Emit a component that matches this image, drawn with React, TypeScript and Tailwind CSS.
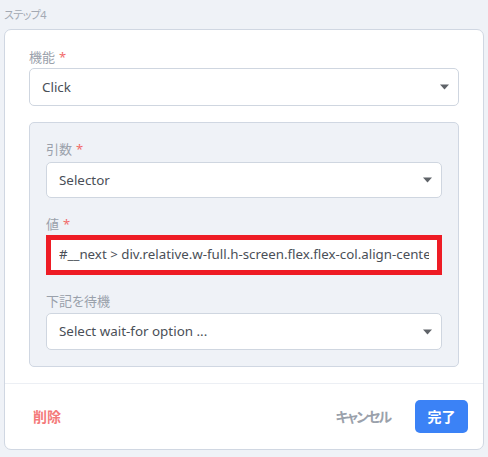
import React from "react";

function Caret() {
  return (
    <svg width="9" height="6" viewBox="0 0 9 6" className="shrink-0">
      <path d="M0 0.5h9L4.5 5.5z" fill="#5f6368" />
    </svg>
  );
}

function Label({ text, required, className = "" }: { text: string; required?: boolean; className?: string }) {
  return (
    <div className={"h-[20px] text-[13px] leading-[20px] text-[#9aa1ab] [font-feature-settings:'palt'] " + className}>
      {text}
      {required ? <span className="ml-1 text-[#f26b6b]">*</span> : null}
    </div>
  );
}

function Select({ value, h }: { value: string; h: string }) {
  return (
    <div
      className={
        "flex items-center justify-between rounded-[5px] border border-[#cfd6e0] bg-white pl-[12px] pr-[9px] text-[13.4px] text-[#4a4f57] " +
        h
      }
    >
      <span>{value}</span>
      <Caret />
    </div>
  );
}

export default function App() {
  return (
    <div
      className="min-h-[457px] w-[488px] bg-[#eff2f7] px-1 pt-[6px]"
      style={{ fontFamily: '"Noto Sans", "Noto Sans CJK JP", sans-serif' }}
    >
      <div className="mb-[5px] h-[18px] text-[11px] leading-[18px] tracking-[-0.6px] text-[#a3a9b3] [font-feature-settings:'palt']">
        ステップ4
      </div>
      <div className="w-[480px] rounded-[7px] border border-[#d0d7e2] bg-white">
        <div className="px-6 pb-4 pt-[17px]">
          <Label text="機能" required className="mb-[1px]" />
          <Select value="Click" h="h-[38px]" />
          <div className="mt-4 rounded-[5px] border border-[#d0d7e2] bg-[#eff2f7] px-4 pb-4 pt-[16px]">
            <Label text="引数" required className="mb-[3px]" />
            <Select value="Selector" h="h-[36px]" />
            <Label text="値" required className="mb-[1px] mt-[16px]" />
            <div className="flex h-[40px] items-center border-[5px] border-[#ee1c25] bg-white px-[8px] text-[13.3px] text-[#4a4f57]">
              <div className="flex-1 overflow-hidden whitespace-nowrap">
                #__next &gt; div.relative.w-full.h-screen.flex.flex-col.align-center
              </div>
            </div>
            <Label text="下記を待機" className="mb-[2px] mt-[16px]" />
            <Select value="Select wait-for option ..." h="h-[37px]" />
          </div>
        </div>
        <div className="flex h-[66px] items-center justify-between border-t border-[#eceff4] pl-[28px] pr-[15px]">
          <span className="text-[14px] font-bold text-[#f47a7a]">削除</span>
          <div className="flex items-center gap-[25px]">
            <span className="text-[14px] font-bold tracking-[-2px] text-[#9aa1ab] [font-feature-settings:'palt']">
              キャンセル
            </span>
            <button className="h-[33px] w-[53px] rounded-[5px] bg-[#3b82f6] text-[14px] font-bold text-white">
              完了
            </button>
          </div>
        </div>
      </div>
    </div>
  );
}
